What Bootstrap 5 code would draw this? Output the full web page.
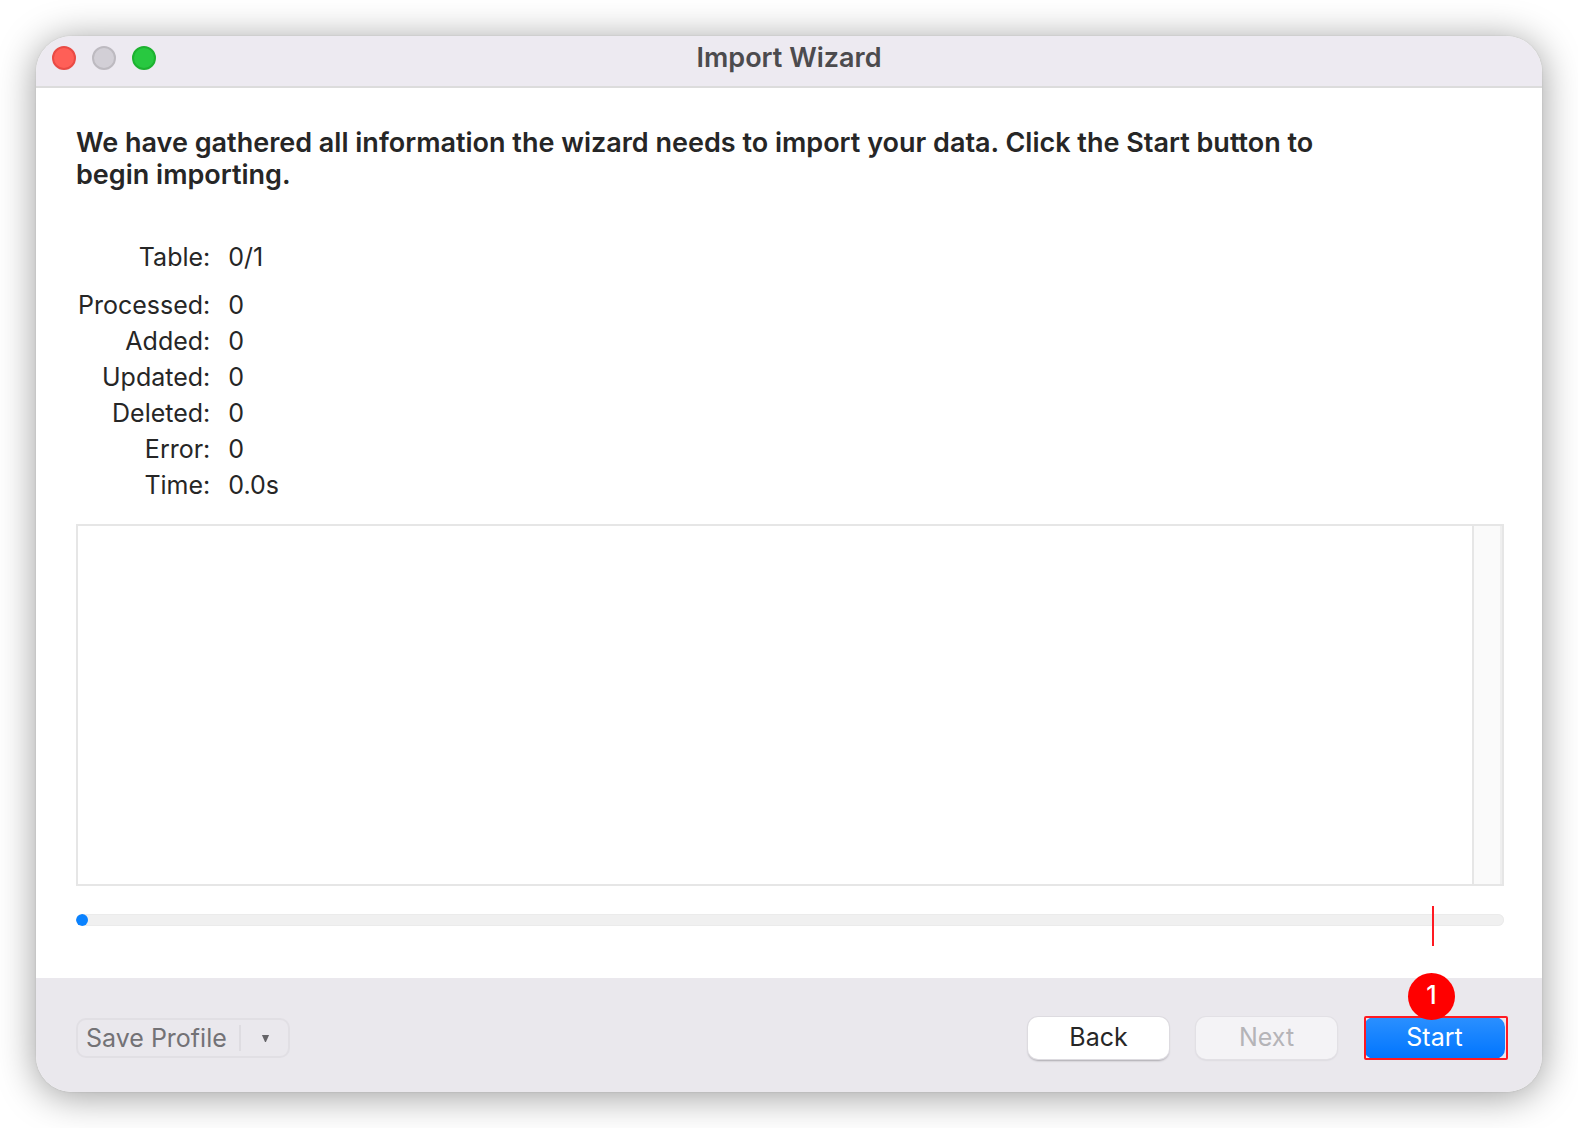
<!DOCTYPE html>
<html lang="en">
<head>
<meta charset="utf-8">
<meta name="viewport" content="width=device-width, initial-scale=1">
<title>Import Wizard</title>
<link href="https://cdn.jsdelivr.net/npm/bootstrap@5.3.0/dist/css/bootstrap.min.css" rel="stylesheet">
<style>
  body { font-family: Inter, "Liberation Sans", sans-serif; font-size: 25px; line-height: 36px; color: #262626; background: #fff; }
  .desk { padding: 36px; }
  .wizard { min-height: calc(100vh - 72px); border-radius: 36px; box-shadow: 0 0 2px rgba(0,0,0,.12), 0 4px 38px rgba(0,0,0,.4); background: #fff; }
  .titlebar { height: 52px; padding: 0 16px 6px; background: #edeaf1; border-bottom: 2px solid #dcdcdc; border-radius: 36px 36px 0 0; }
  .titlebar h1 { font-size: 27px; line-height: 32px; font-weight: 600; color: #4c4b4e; }
  .lights { gap: 16px; flex: 1 1 0; }
  .light { width: 24px; height: 24px; border-radius: 50%; border: 2px solid; padding: 0; }
  .light-close { background: #ff5f57; border-color: #e94b45; }
  .light-min { background: #d2cfd6; border-color: #bdbac0; }
  .light-zoom { background: #28c840; border-color: #1db230; }
  .content { padding: 39px 38px 52px 40px; }
  .intro { font-size: 27px; line-height: 32px; font-weight: 600; padding-right: 160px; margin-bottom: 48px; }
  .stats th { font-weight: 400; text-align: right; padding: 0 18px 0 2px; }
  .stats td { padding: 0; }
  .stats tr.total > * { padding-bottom: 12px; }
  .log { border: 2px solid #e6e6e6; min-height: 100px; margin-top: 21px; }
  .log textarea { border: 0; resize: none; background: #fff; outline: 0; }
  .log-track { width: 30px; background: #fafafa; border-left: 2px solid #e6e6e6; border-right: 2px solid #efefef; }
  .meter { height: 12px; margin-top: 28px; background: #f0f0f0; border-radius: 6px; box-shadow: inset 0 0 0 1px #ebebeb; }
  .meter .progress-bar { min-width: 12px; border-radius: 6px; background: #0a82ff; }
  .actions { height: 114px; padding: 6px 37px 0 40px; background: #eae8ed; border-radius: 0 0 36px 36px; }
  .actions-main { gap: 27px; }
  .push { width: 141px; height: 42px; border: 0; border-radius: 10px; padding: 0 0 2px; font-size: 25px; line-height: 36px; }
  .push-back, .push-back:hover { background: #fff; color: #262626; box-shadow: 0 0 0 1px #dddbe0, 0 2px 2px #aaa8ae; }
  .push-next:disabled { background: #f4f3f6; color: #b5b4b8; opacity: 1; box-shadow: 0 0 0 1px #e2e0e5, 0 1px 2px #c4c2c8; }
  .push-start, .push-start:hover { background: linear-gradient(#2b90ff, #0075ff); color: #fff; }
  .save { height: 40px; border: 2px solid #e1dfe4; border-radius: 10px; }
  .save .btn { border: 0; padding: 0 12px 0 8px; font-size: 25px; line-height: 34px; color: #737276; opacity: 1; background: none; }
  .save .btn.save-more { padding: 0 18px 0 20px; border-left: 2px solid #dedce1; border-radius: 0; height: 26px; line-height: 1; }
  .save svg { display: block; }
  .mark-box { position: absolute; inset: -1px -3px -1px 0; border: 2px solid #ff1a22; border-radius: 2px; pointer-events: none; }
  .mark-num { position: absolute; left: 44px; top: -44px; width: 47px; height: 47px; border-radius: 50%; background: #f00; color: #fff; font-size: 25px; font-weight: 500; line-height: 44px; text-align: center; }
  .mark-line { position: absolute; left: 68px; top: -111px; width: 2px; height: 40px; background: #ff1a22; }
</style>
</head>
<body>
<div class="desk">
  <main class="wizard d-flex flex-column">
    <header class="titlebar d-flex align-items-center">
      <div class="lights d-flex">
        <button type="button" class="light light-close" aria-label="Close"></button>
        <button type="button" class="light light-min" aria-label="Minimize" disabled></button>
        <button type="button" class="light light-zoom" aria-label="Zoom"></button>
      </div>
      <h1 class="m-0">Import Wizard</h1>
      <div class="lights"></div>
    </header>

    <section class="content flex-grow-1 d-flex flex-column">
      <p class="intro">We have gathered all information the wizard needs to import your data. Click the Start button to begin importing.</p>
      <table class="stats align-self-start">
        <tbody>
          <tr class="total"><th scope="row">Table:</th><td>0/1</td></tr>
          <tr><th scope="row">Processed:</th><td>0</td></tr>
          <tr><th scope="row">Added:</th><td>0</td></tr>
          <tr><th scope="row">Updated:</th><td>0</td></tr>
          <tr><th scope="row">Deleted:</th><td>0</td></tr>
          <tr><th scope="row">Error:</th><td>0</td></tr>
          <tr><th scope="row">Time:</th><td>0.0s</td></tr>
        </tbody>
      </table>
      <div class="log flex-grow-1 d-flex">
        <textarea class="flex-grow-1" aria-label="Import log" readonly></textarea>
        <div class="log-track"></div>
      </div>
      <div class="meter progress" role="progressbar" aria-label="Import progress" aria-valuenow="0" aria-valuemin="0" aria-valuemax="100">
        <div class="progress-bar" style="width: 0%"></div>
      </div>
    </section>

    <footer class="actions d-flex align-items-center justify-content-between">
      <div class="save d-flex align-items-center">
        <button type="button" class="btn" disabled>Save Profile</button>
        <button type="button" class="btn save-more" aria-label="More save options" disabled>
          <svg width="9" height="9" viewBox="0 0 10 10" aria-hidden="true"><path d="M1 1h8L5.500 9h-1z" fill="#656468"/></svg>
        </button>
      </div>
      <div class="actions-main d-flex">
        <button type="button" class="btn push push-back">Back</button>
        <button type="button" class="btn push push-next" disabled>Next</button>
        <div class="position-relative d-flex">
          <button type="button" class="btn push push-start">Start</button>
          <span class="mark-box"></span>
          <span class="mark-line"></span>
          <span class="mark-num">1</span>
        </div>
      </div>
    </footer>
  </main>
</div>
<script src="https://cdn.jsdelivr.net/npm/bootstrap@5.3.0/dist/js/bootstrap.bundle.min.js"></script>
</body>
</html>
